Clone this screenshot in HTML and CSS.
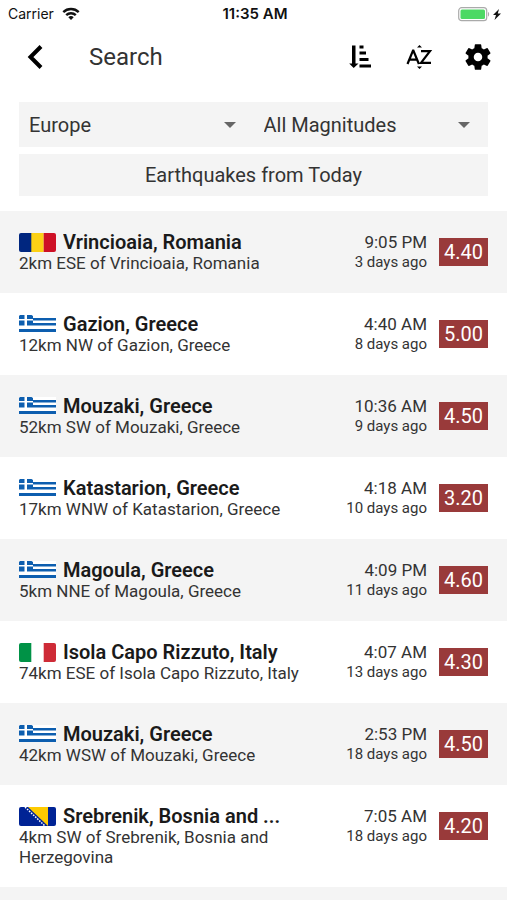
FILE: index.html
```
<!DOCTYPE html>
<html lang="en">
  <head>
    <meta charset="UTF-8" />
    <meta name="viewport" content="width=device-width, initial-scale=1.0" />
    <title>Search</title>
    <link rel="stylesheet" href="styles.css">
  </head>
  <body>
    <!-- Flags, reused by the rows -->
    <svg class="sprite" aria-hidden="true">
      <symbol id="flag-ro" viewBox="0 0 37 19">
        <path fill="#00267f" d="M2 0h11v19H2a2 2 0 0 1-2-2V2a2 2 0 0 1 2-2z" />
        <path fill="#fcd116" d="M12.300 0h12.400v19H12.300z" />
        <path fill="#ce1126" d="M24.700 0H35a2 2 0 0 1 2 2v15a2 2 0 0 1-2 2H24.700z" />
      </symbol>
      <symbol id="flag-it" viewBox="0 0 37 19">
        <path fill="#fff" d="M12 0h13v19H12z" />
        <path fill="#009246" d="M2 0h10.300v19H2a2 2 0 0 1-2-2V2a2 2 0 0 1 2-2z" />
        <path fill="#ce2b37" d="M24.700 0H35a2 2 0 0 1 2 2v15a2 2 0 0 1-2 2H24.700z" />
      </symbol>
      <symbol id="flag-gr" viewBox="0 0 37 19">
        <path fill="#fff" d="M0 0h37v17H0z" />
        <path fill="#0d5eaf" d="M1 0h4.500v4H0V1zM8 0h4.500l1.500 1v3H8zM0 5.500h5.500v5H0zM8 5.500h6v5H8z" />
        <path fill="#0d5eaf" d="M14 3h23v2.500H14zM14 8h23v2.500H14zM0 14h37v3H0z" />
      </symbol>
      <symbol id="flag-ba" viewBox="0 0 37 19">
        <rect width="37" height="19" rx="2" fill="#002395" />
        <path fill="#fecb00" d="M9 0h20v19z" />
        <path stroke="#fff" stroke-width="1.500" stroke-dasharray="1.600 1.200" d="M6 0l20 19" />
      </symbol>
    </svg>

    <div class="status-bar">
      <div class="carrier">
        <span>Carrier</span>
        <svg width="18" height="14" viewBox="0 0 18 14" aria-hidden="true">
          <g fill="none" stroke="#111" stroke-width="2.400">
            <path d="M1.300 5.200a11 11 0 0 1 15.400 0" />
            <path d="M4.200 8.200a6.900 6.900 0 0 1 9.600 0" />
          </g>
          <path fill="#111" d="M9 13L6.300 10.300a3.900 3.900 0 0 1 5.400 0z" />
        </svg>
      </div>
      <div class="clock">11:35 AM</div>
      <div class="battery">
        <svg width="44" height="16" viewBox="0 0 44 16" aria-hidden="true">
          <rect x="0.700" y="1.700" width="28" height="13" rx="3" fill="#fff" stroke="#aaa" stroke-width="1.200" />
          <rect x="2.500" y="3.500" width="24.500" height="9.500" rx="1.500" fill="#4cd964" />
          <path fill="#aaa" d="M30 6c1.500.5 1.500 4 0 4.500z" />
          <path fill="#111" d="M41 3l-6 6h3l-1.500 5 6.500-6.500h-3.200z" />
        </svg>
      </div>
    </div>

    <header class="toolbar">
      <button class="icon-btn" type="button" aria-label="Back">
        <svg width="32" height="32" viewBox="0 0 32 32" aria-hidden="true">
          <path fill="none" stroke="#000" stroke-width="4" d="M22 5.500L11.500 16 22 26.500" />
        </svg>
      </button>
      <h1>Search</h1>
      <div class="actions">
        <button class="icon-btn" type="button" aria-label="Sort by magnitude">
          <svg width="32" height="32" viewBox="0 0 32 32" aria-hidden="true">
            <path d="M8 4.500h3.500v18h3L9.700 27 5.200 22.500H8zM15.500 4.500h4v3h-4zM15.500 10.500h6.500v3h-6.500zM15.500 17h9v3h-9zM15.500 23.500H27v3H15.500z" />
          </svg>
        </button>
        <button class="icon-btn" type="button" aria-label="Sort by name">
          <svg width="32" height="32" viewBox="0 0 32 32" aria-hidden="true">
            <path fill="none" stroke="#000" stroke-width="2.200" d="M4.500 23L10 9.500h.4L15.900 23M6.300 18.700h7.800M18 10.200h9L18 21.900H28" />
            <path d="M16.500 4l2.500 2.500h-5zM16.500 28l2.500-2.500h-5z" />
          </svg>
        </button>
        <button class="icon-btn" type="button" aria-label="Settings">
          <svg width="32" height="32" viewBox="0 0 24 24" aria-hidden="true">
            <path d="M19.140 12.940c.04-.3.060-.61.060-.94s-.02-.64-.07-.94l2.030-1.580a.49.49 0 0 0 .12-.61l-1.920-3.320a.49.49 0 0 0-.59-.22l-2.390.96a7 7 0 0 0-1.620-.94l-.36-2.540a.48.48 0 0 0-.48-.41h-3.840a.47.47 0 0 0-.47.41l-.36 2.540c-.59.240-1.130.570-1.620.94l-2.390-.96a.48.48 0 0 0-.59.220L2.740 8.870a.47.47 0 0 0 .12.61l2.030 1.580c-.05.3-.09.630-.09.940s.02.640.07.940l-2.030 1.580a.49.49 0 0 0-.12.610l1.920 3.320c.12.220.370.290.590.220l2.390-.96c.5.380 1.030.700 1.620.940l.36 2.540c.05.240.240.410.480.410h3.840c.24 0 .44-.17.470-.41l.36-2.540a7 7 0 0 0 1.620-.94l2.390.96c.22.080.470 0 .59-.22l1.920-3.320a.47.47 0 0 0-.12-.61zM12 15.200a3.200 3.200 0 1 1 0-6.400 3.200 3.200 0 0 1 0 6.400z" />
          </svg>
        </button>
      </div>
    </header>

    <div class="filters">
      <div class="selects">
        <label class="select-wrap">
          <select aria-label="Region">
            <option>Europe</option>
          </select>
        </label>
        <label class="select-wrap">
          <select aria-label="Magnitude">
            <option>All Magnitudes</option>
          </select>
        </label>
      </div>
      <button class="date-btn" type="button">Earthquakes from Today</button>
    </div>

    <ul class="quakes">
      <li class="quake">
        <div class="info">
          <div class="place">
            <svg class="flag" aria-hidden="true"><use href="#flag-ro" /></svg>
            <h2>Vrincioaia, Romania</h2>
          </div>
          <p>2km ESE of Vrincioaia, Romania</p>
        </div>
        <div class="when">
          <div class="time">9:05 PM</div>
          <div class="ago">3 days ago</div>
        </div>
        <div class="magnitude">4.40</div>
      </li>
      <li class="quake">
        <div class="info">
          <div class="place">
            <svg class="flag" aria-hidden="true"><use href="#flag-gr" /></svg>
            <h2>Gazion, Greece</h2>
          </div>
          <p>12km NW of Gazion, Greece</p>
        </div>
        <div class="when">
          <div class="time">4:40 AM</div>
          <div class="ago">8 days ago</div>
        </div>
        <div class="magnitude">5.00</div>
      </li>
      <li class="quake">
        <div class="info">
          <div class="place">
            <svg class="flag" aria-hidden="true"><use href="#flag-gr" /></svg>
            <h2>Mouzaki, Greece</h2>
          </div>
          <p>52km SW of Mouzaki, Greece</p>
        </div>
        <div class="when">
          <div class="time">10:36 AM</div>
          <div class="ago">9 days ago</div>
        </div>
        <div class="magnitude">4.50</div>
      </li>
      <li class="quake">
        <div class="info">
          <div class="place">
            <svg class="flag" aria-hidden="true"><use href="#flag-gr" /></svg>
            <h2>Katastarion, Greece</h2>
          </div>
          <p>17km WNW of Katastarion, Greece</p>
        </div>
        <div class="when">
          <div class="time">4:18 AM</div>
          <div class="ago">10 days ago</div>
        </div>
        <div class="magnitude">3.20</div>
      </li>
      <li class="quake">
        <div class="info">
          <div class="place">
            <svg class="flag" aria-hidden="true"><use href="#flag-gr" /></svg>
            <h2>Magoula, Greece</h2>
          </div>
          <p>5km NNE of Magoula, Greece</p>
        </div>
        <div class="when">
          <div class="time">4:09 PM</div>
          <div class="ago">11 days ago</div>
        </div>
        <div class="magnitude">4.60</div>
      </li>
      <li class="quake">
        <div class="info">
          <div class="place">
            <svg class="flag" aria-hidden="true"><use href="#flag-it" /></svg>
            <h2>Isola Capo Rizzuto, Italy</h2>
          </div>
          <p>74km ESE of Isola Capo Rizzuto, Italy</p>
        </div>
        <div class="when">
          <div class="time">4:07 AM</div>
          <div class="ago">13 days ago</div>
        </div>
        <div class="magnitude">4.30</div>
      </li>
      <li class="quake">
        <div class="info">
          <div class="place">
            <svg class="flag" aria-hidden="true"><use href="#flag-gr" /></svg>
            <h2>Mouzaki, Greece</h2>
          </div>
          <p>42km WSW of Mouzaki, Greece</p>
        </div>
        <div class="when">
          <div class="time">2:53 PM</div>
          <div class="ago">18 days ago</div>
        </div>
        <div class="magnitude">4.50</div>
      </li>
      <li class="quake">
        <div class="info">
          <div class="place">
            <svg class="flag" aria-hidden="true"><use href="#flag-ba" /></svg>
            <h2>Srebrenik, Bosnia and ...</h2>
          </div>
          <p>4km SW of Srebrenik, Bosnia and Herzegovina</p>
        </div>
        <div class="when">
          <div class="time">7:05 AM</div>
          <div class="ago">18 days ago</div>
        </div>
        <div class="magnitude">4.20</div>
      </li>
    </ul>
  </body>
</html>
```
FILE: styles.css
```
* {
  box-sizing: border-box;
}
body {
  font-family: Roboto, sans-serif;
  background-color: #f4f4f4;
  color: #333333;
  margin: 0;
  min-height: 100vh;
}
h1,
h2,
p,
ul {
  margin: 0;
  padding: 0;
}
button,
select {
  font-family: inherit;
  color: inherit;
  border: none;
  border-radius: 0;
  cursor: pointer;
}
svg {
  display: block;
  flex-shrink: 0;
}
.sprite {
  position: absolute;
  width: 0;
  height: 0;
}
.status-bar {
  display: grid;
  grid-template-columns: 1fr auto 1fr;
  align-items: center;
  height: 27px;
  padding: 0 5px 0 8px;
  background-color: #ffffff;
  color: #111111;
  font-family: Inter, sans-serif;
  font-size: 14px;
}
.carrier {
  display: flex;
  align-items: center;
  gap: 8px;
}
.clock {
  font-size: 15px;
  font-weight: 600;
}
.battery {
  display: flex;
  justify-content: flex-end;
}
.toolbar {
  display: flex;
  align-items: center;
  height: 59px;
  padding: 0 13px 0 19px;
  background-color: #ffffff;
}
.toolbar h1 {
  flex: 1;
  margin-left: 38px;
  font-size: 24px;
  font-weight: 400;
}
.actions {
  display: flex;
  gap: 27px;
}
.icon-btn {
  padding: 0;
  background: none;
}
.filters {
  padding: 16px 19px 15px;
  background-color: #ffffff;
}
.selects {
  display: grid;
  grid-template-columns: 1fr 1fr;
  background-color: #f4f4f4;
}
.select-wrap {
  position: relative;
}
.select-wrap select {
  appearance: none;
  display: block;
  width: 100%;
  height: 45px;
  padding: 0 32px 0 10px;
  background: none;
  font-size: 20px;
}
.select-wrap::after {
  content: "";
  position: absolute;
  top: 20px;
  right: 18px;
  border: 6px solid transparent;
  border-top-color: #666666;
  border-bottom: none;
  pointer-events: none;
}
.date-btn {
  display: block;
  width: 100%;
  height: 42px;
  margin-top: 7px;
  background-color: #f4f4f4;
  font-size: 20px;
}
.quakes {
  list-style: none;
}
.quake {
  display: flex;
  align-items: flex-start;
  padding: 20px 19px;
  background-color: #ffffff;
}
.quake:nth-child(odd) {
  background-color: #f4f4f4;
}
.info {
  flex: 1;
  min-width: 0;
}
.place {
  display: flex;
  align-items: center;
  gap: 7px;
}
.flag {
  width: 37px;
  height: 19px;
}
.place h2 {
  overflow: hidden;
  white-space: nowrap;
  text-overflow: ellipsis;
  color: #1a1a1a;
  font-size: 20px;
  line-height: 22px;
  font-weight: 600;
}
.info p {
  font-size: 17px;
  line-height: 20px;
}
.when {
  width: 100px;
  text-align: right;
}
.time {
  font-size: 17px;
  line-height: 22px;
}
.ago {
  font-size: 15px;
  line-height: 18px;
}
.magnitude {
  width: 49px;
  margin: 7px 0 0 12px;
  background-color: #993a3a;
  color: #ffffff;
  font-size: 20px;
  line-height: 28px;
  text-align: center;
}
```
